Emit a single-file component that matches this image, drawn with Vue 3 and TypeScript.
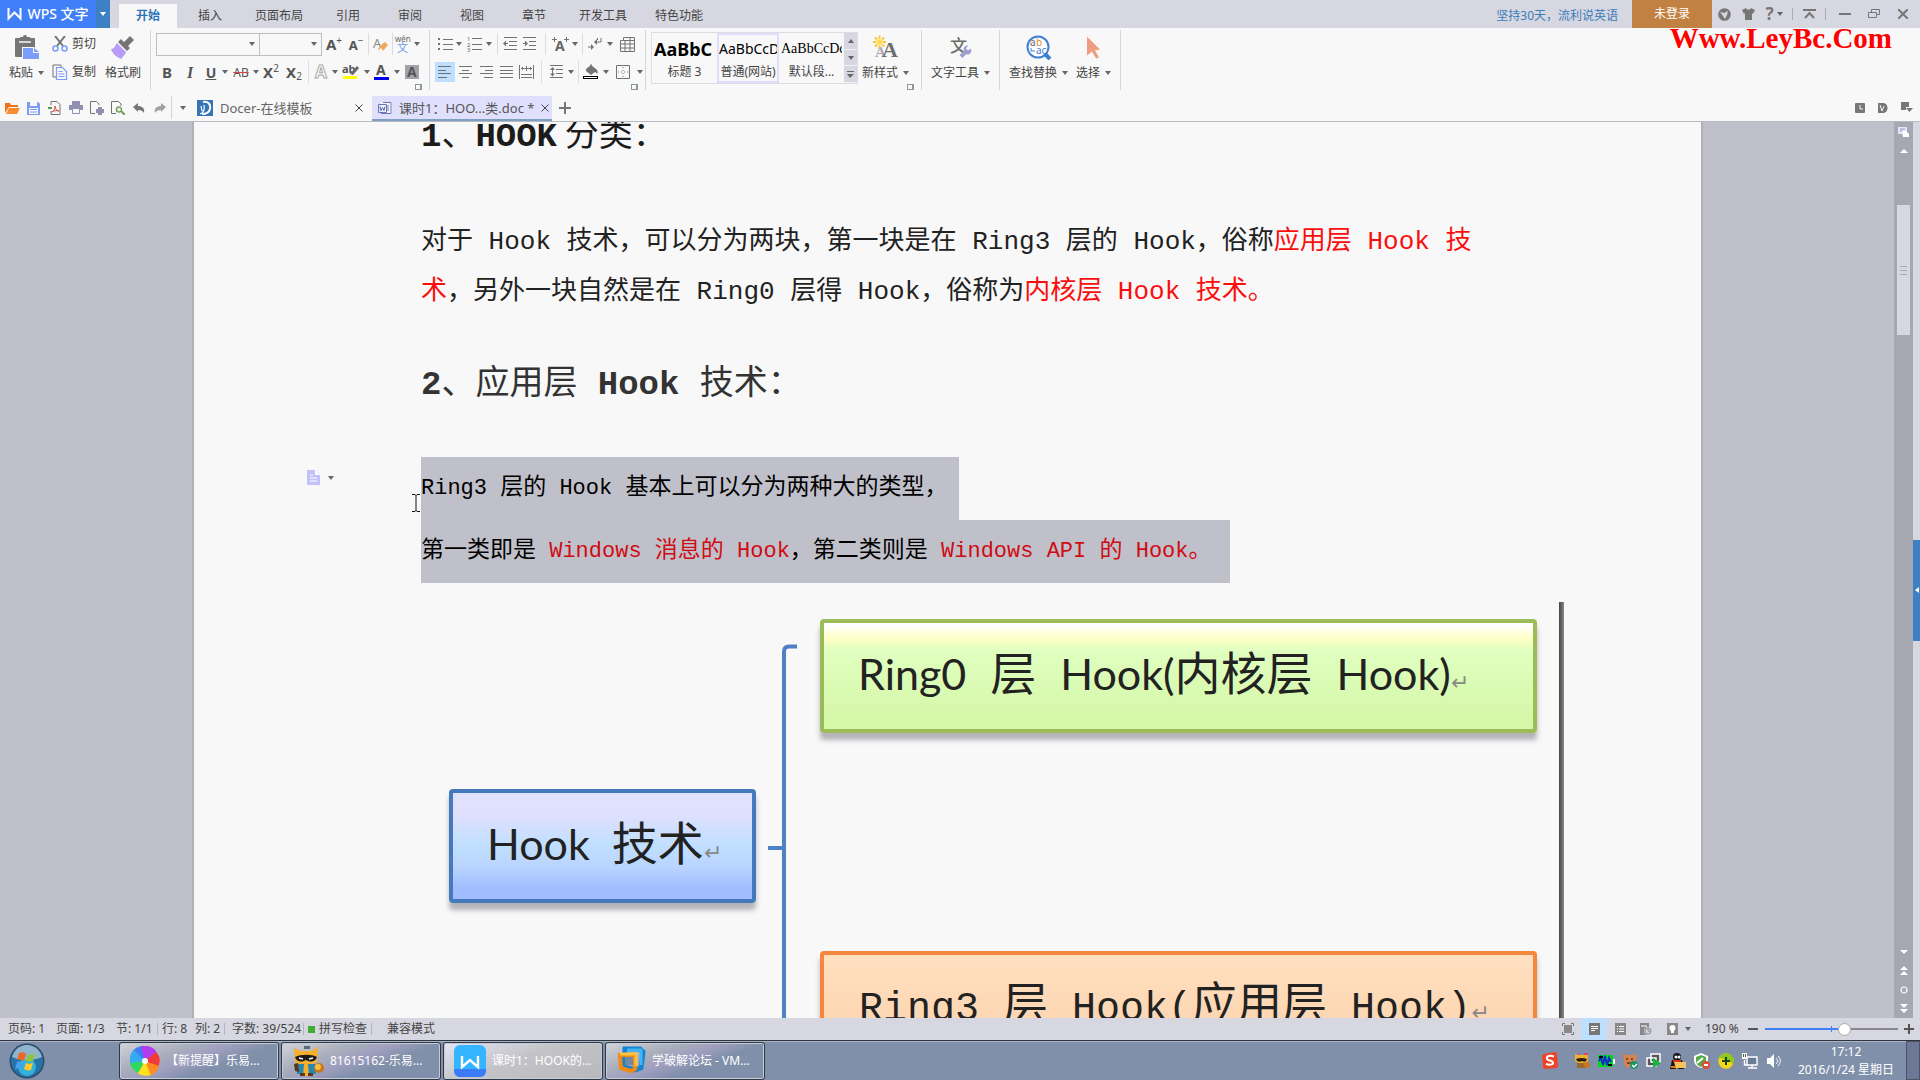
<script setup lang="ts">
import { h, ref, type FunctionalComponent } from 'vue'

type Part = { tag: string; attrs: Record<string, string | number>; text?: string }
type IconDef = [number, number, Part[]]

const P = (d: string, fill = '#737373'): Part => ({ tag: 'path', attrs: { d, fill } })
const S = (d: string, stroke = '#737373', w = 1): Part => ({ tag: 'path', attrs: { d, stroke, 'stroke-width': w, fill: 'none' } })
const C = (cx: number, cy: number, r: number, fill = '#737373'): Part => ({ tag: 'circle', attrs: { cx, cy, r, fill } })
const R = (x: number, y: number, width: number, height: number, fill = '#737373', rx = 0): Part => ({ tag: 'rect', attrs: { x, y, width, height, fill, rx } })
const T = (text: string, x: number, y: number, size: number, fill = '#666', weight = 400, family = 'Noto Sans'): Part => ({
  tag: 'text',
  attrs: { x, y, 'font-size': size, fill, 'font-weight': weight, 'font-family': `"${family}", "Noto Sans CJK SC", sans-serif` },
  text,
})

const ICONS: Record<string, IconDef> = {
  drop: [6, 4, [P('M0 0h6L3 4z', '#666')]],
  up: [6, 4, [P('M0 4h6L3 0z', '#666')]],
  more: [7, 7, [R(0, 0, 7, 1, '#666'), P('M0 3h7L3 7z', '#666')]],
  dropWhite: [6, 4, [P('M0 0h6L3 4z', '#fff')]],
  wps: [15, 14, [S('M1.5 1v10.5l6-6 6 6V1', '#fff', 2)]],
  paste: [26, 25, [R(1, 3, 20, 19, '#757575', 1), P('M6 6V2h3a2 2 0 0 1 4 0h3v4z', '#757575'), S('M5 7h12', '#f8f8f8', 1.5), P('M8 12h12l5 5v7H8z', '#f8f8f8'), P('M9 13h10v5h6v6H9z', '#7b9dfb'), P('M20 13l5 4h-5z', '#7b9dfb')]],
  cut: [16, 16, [S('M3 0l8 10M13 0L5 10', '#737373', 2), S('M6 12.5a2.5 2.5 0 1 1-5 0 2.5 2.5 0 0 1 5 0zM15 12.5a2.5 2.5 0 1 1-5 0 2.5 2.5 0 0 1 5 0z', '#7b9dfb', 1.5)]],
  copy: [16, 16, [S('M4 13H1V1h8v2', '#737373'), S('M4.500 3.500h6l4 4v8h-10z', '#7b9dfb', 1.2), S('M6.500 7.500h4M6.500 10h6M6.500 12.500h6', '#7b9dfb')]],
  brush: [26, 25, [P('M20 1l4 4-6 6 2 2-3 3-9-9 3-3 3 3z', '#757575'), P('M7 8l9 9c-1 4-5 5-4 7C7 23 2 18 1 14c3 0 4-3 6-6z', '#b99cf5')]],
  eraser: [15, 16, [T('A', 0, 12, 13, '#8a8a8a', 400, 'Noto Sans'), P('M8 9l4-3 3 3-5 6H6l-1-2z', '#f1a95c'), P('M7 12l3 2-1 1H6z', '#fff')]],
  wen: [16, 18, [T('wén', 0, 7, 8, '#666'), T('文', 2, 17, 11, '#6f9bea')]],
  bullets: [15, 14, [R(0, 1, 2, 2), R(0, 6, 2, 2), R(0, 11, 2, 2), R(5, 2, 10, 1), R(5, 7, 10, 1), R(5, 12, 10, 1)]],
  numbers: [15, 16, [T('1', 0, 5, 6), T('2', 0, 11, 6), T('3', 0, 16, 6), R(5, 2, 10, 1), R(5, 8, 10, 1), R(5, 13, 10, 1)]],
  outdent: [14, 14, [R(1, 0, 13, 1), R(6, 4, 8, 1), R(6, 8, 8, 1), R(1, 12, 13, 1), S('M5 6.500H1', '#737373', 1), P('M0 6.500l3-3v6z')]],
  indent: [14, 14, [R(0, 0, 13, 1), R(6, 4, 7, 1), R(6, 8, 7, 1), R(0, 12, 13, 1), S('M0 6.500h3'), P('M5 6.500l-3-3v6z')]],
  awidth: [17, 16, [T('A', 3, 15, 14, '#666', 700), S('M0 3.500h5M12 3.500h5M2.500 1v5M14.500 1v5')]],
  tabs: [14, 14, [S('M13 1v4H7'), P('M6 5l3-3v6z'), S('M0 10h4', '#737373'), P('M6 10l-3-3v6z'), R(9, 1, 1, 2)]],
  table: [15, 15, [S('M3.500.5h11v14H.5v-11h3zM3.500 3.500h11M.5 7h14M.5 11h14M5 3v12M10 0v15')]],
  left: [14, 12, [R(0, 0, 13, 1), R(0, 4, 8, 1), R(0, 7, 13, 1), R(0, 11, 9, 1)]],
  center: [14, 12, [R(0, 0, 13, 1), R(3, 4, 7, 1), R(0, 7, 13, 1), R(3, 11, 7, 1)]],
  right: [14, 12, [R(0, 0, 13, 1), R(5, 4, 8, 1), R(0, 7, 13, 1), R(4, 11, 9, 1)]],
  justify: [14, 12, [R(0, 0, 13, 1), R(0, 4, 13, 1), R(0, 7, 13, 1), R(0, 11, 13, 1)]],
  distribute: [16, 14, [R(0, 0, 1, 14), R(14, 0, 1, 14), S('M2 3.500h11M7.500 1v5M2 9.500h11M2 12.500h11'), P('M2 3.500l2-2v4zM13 3.500l-2-2v4z')]],
  spacing: [15, 14, [R(1, 0, 13, 1), R(7, 4, 7, 1), R(7, 8, 7, 1), R(1, 12, 13, 1), S('M3.500 3v7'), P('M1 5l2.500-3L6 5zM1 8.500l2.500 3 2.500-3z')]],
  bucket: [16, 16, [P('M3 5l5-4 5 4c2 1 2 4 1 5-1-1-1-2-2-2l-4 3-5-4z'), S('M8 0v4'), { tag: 'rect', attrs: { x: 0.5, y: 12.5, width: 14, height: 2, fill: '#fff', stroke: '#000' } }]],
  border: [15, 15, [S('M.5.5h13v13H.5z'), { tag: 'path', attrs: { d: 'M7 2v10M2 7h10', stroke: '#737373', 'stroke-dasharray': '1 2', fill: 'none' } }]],
  highlight: [18, 16, [T('ab', 0, 9, 11, '#555', 700), P('M8 10l7-8 2 2-6 7z', '#666'), R(1, 12, 14, 3, '#ffff00')]],
  fontColor: [16, 17, [T('A', 2, 11, 14, '#555', 700), R(0, 13, 15, 3, '#0000f0')]],
  outlineA: [15, 16, [{ tag: 'text', attrs: { x: 1, y: 14, 'font-size': 17, fill: '#fff', stroke: '#a8a8a8', 'stroke-width': 1, 'font-family': 'Noto Sans', 'font-weight': 700 }, text: 'A' }]],
  shadeA: [14, 15, [R(0, 0, 14, 14, '#a2a2a8'), T('A', 2, 12, 14, '#555', 700)]],
  newStyle: [26, 24, [T('A', 2, 21, 15, '#b0a8b8', 700, 'Liberation Serif'), T('A', 9, 21, 22, '#6d6d6d', 700, 'Liberation Serif'), S('M6.500 0v13M0 6.500h13M2 2l9 9M11 2l-9 9', '#f6c445', 2), C(6.5, 6.5, 3.5, '#fff2a0'), C(6.5, 6.5, 2.5, '#ffd84d')]],
  textTool: [26, 24, [T('文', 2, 16, 17, '#6d6d6d', 500), S('M13 21l5-5', '#9da0cf', 4), P('M16 15c-1-3 1-5 4-5l-2 3 2 2 3-2c1 4-1 6-4 6z', '#9da0cf')]],
  find: [26, 25, [C(12, 12, 10.5, '#fff'), S('M22.500 12a10.500 10.500 0 1 1-21 0 10.500 10.500 0 0 1 21 0z', '#3f80d0', 2), T('a', 4, 11, 10), T('b', 10, 11, 10, '#df8a3c'), T('ac', 10, 19, 10, '#3f80d0'), S('M5 13v3h4', '#3f80d0'), S('M19 19l5 5', '#3f80d0', 4)]],
  select: [15, 24, [P('M1 1l13 13-5 1 4 7-3 1-4-7-5 4z', '#ee9d80')]],
  open: [15, 12, [P('M0 1h5l1 2h7v2H4L0 11z', '#f1731c'), P('M4 6h11l-3 6H1z', '#ff8a2c')]],
  save: [13, 14, [P('M0 1h11l2 2v11H0z', '#7d9cf3'), R(3, 1, 7, 4, '#f8f8f8'), R(2, 7, 9, 6, '#f8f8f8'), S('M3 8.500h7M3 11h7', '#7d9cf3')]],
  pdf: [13, 14, [S('M3 4V.5h6l3 3v10H3V10', '#737373'), S('M4 11c3-2 3-4 3-6 0 3 2 5 4 5-3-1-5 0-7 1z', '#d84848'), S('M0 7h4', '#5a9a50', 2)]],
  print: [14, 13, [R(3, 0, 8, 4, '#8f8fb0'), R(0, 4, 14, 5, '#8f8fb0'), R(3, 8, 8, 5, '#f8f8f8'), S('M3.500 7.500h7v5h-7z', '#8f8fb0')]],
  preview: [14, 14, [S('M9 4V3L6.500.5H.5v12H5', '#737373'), R(6, 8, 8, 4, '#8f8fb0'), R(8, 6, 4, 2, '#8f8fb0'), R(8, 11, 4, 3, '#8f8fb0')]],
  find2: [14, 14, [S('M10 5V3L7.500.5H.5v12H5', '#737373'), S('M10.500 8.500a2.500 2.500 0 1 1-5 0 2.500 2.500 0 0 1 5 0z', '#6fa05c', 1.5), S('M10 10l4 4', '#6fa05c', 2)]],
  undo: [12, 10, [P('M0 4l5-4v3c4 0 7 2 6 7-1-2-3-3-6-3v2z', '#777')]],
  redo: [12, 10, [P('M12 4L7 0v3C3 3 0 5 1 10c1-2 3-3 6-3v2z', '#a0a0a0')]],
  docer: [16, 16, [R(0, 0, 16, 16, '#3574b5'), S('M6 2c5-1 8 2 7 7-1 4-4 5-8 5', '#fff', 2), S('M3 14c3-1 5-4 4-9M4 6l1 5', '#fff', 1.2)]],
  doc: [14, 14, [R(3, 1, 11, 12, '#f4f4ff'), S('M5 1.500h8v11H3', '#6d78a8'), S('M.5 3.500h8v8h-8z', '#6d78b8'), S('M2 5.500l1 4 1.500-3 1.500 3 1-4', '#4d6db8'), S('M10 4v6', '#6d78a8')]],
  close: [8, 8, [S('M.5.5l7 7M7.500.5l-7 7', '#444', 1)]],
  plus: [12, 12, [R(0, 5, 12, 2, '#777'), R(5, 0, 2, 12, '#777')]],
  zoomPlus: [10, 10, [R(0, 4, 10, 2, '#555'), R(4, 0, 2, 10, '#555')]],
  zoomMinus: [10, 2, [R(0, 0, 10, 2, '#555')]],
  globe: [13, 13, [C(6.5, 6.5, 6.3, '#777'), P('M2 4l4 1 4-2-1 4-2 4-2-3z', '#d7d7e1')]],
  shirt: [13, 12, [P('M4 0c1 2 4 2 5 0l4 2-2 4-1-1v7H3V5L2 6 0 2z', '#777')]],
  collapse: [13, 10, [R(0, 0, 13, 2, '#777'), S('M2 9l4.500-5L11 9', '#777', 2)]],
  minimize: [12, 2, [R(0, 0, 12, 2, '#777')]],
  restore: [12, 10, [S('M3.500 3V.5h8v5H9M.5 3.500h8v5h-8z', '#777')]],
  closeBig: [10, 10, [S('M0 0l10 10M10 0L0 10', '#777', 2)]],
  clock: [10, 10, [R(0, 0, 10, 10, '#777', 1), S('M5 2v4h3', '#f8f8f8')]],
  d: [10, 10, [P('M0 0h5c6 0 6 10 0 10H0z', '#777'), S('M2 2l2 6M6 3L4 8', '#f8f8f8')]],
  pane: [12, 11, [P('M0 0h8v5H5v3H0z', '#777'), P('M5 6h7L8.500 10z', '#777')]],
  nav: [12, 12, [R(0, 1, 9, 7, '#e4e4ff'), S('M2 3h5M2 5h3', '#9a9ac0'), P('M4 5h4l3 3v3H5z', '#fff')]],
  tri: [8, 4, [P('M0 4h8L4 0z', '#fff')]],
  triDown: [8, 4, [P('M0 0h8L4 4z', '#fff')]],
  dblUp: [8, 9, [P('M0 4h8L4 0zM0 9h8L4 5z', '#fff')]],
  ring: [8, 8, [S('M7 4a3 3 0 1 1-6 0 3 3 0 0 1 6 0z', '#fff', 1.2)]],
  dblDown: [8, 9, [P('M0 0h8L4 4zM0 5h8L4 9z', '#fff')]],
  triLeft: [4, 6, [P('M4 0v6L0 3z', '#fff')]],
  full: [12, 12, [R(2, 2, 8, 8, '#888'), S('M.5 3V.5H3M9 .5h2.500V3M11.500 9v2.500H9M3 11.500H.5V9', '#777')]],
  viewPage: [11, 12, [R(0, 0, 11, 12, '#777'), S('M2 3.500h7M2 5.500h7M2 7.500h4', '#fff')]],
  viewList: [11, 12, [R(0, 0, 11, 12, '#888'), S('M2 3.500h1M4 3.500h5M2 6h1M4 6h5M2 8.500h1M4 8.500h5', '#fff')]],
  viewWeb: [12, 12, [R(0, 0, 9, 12, '#888'), S('M1 3h6', '#fff'), C(8, 8, 4, '#d7d7e1'), S('M11 8a3 3 0 1 1-6 0 3 3 0 0 1 6 0zM8 6v2h2', '#888')]],
  viewBulb: [11, 12, [R(0, 0, 11, 12, '#888'), C(5.5, 5, 3, '#fff'), R(4, 7, 3, 3, '#fff')]],
  docMark: [13, 15, [P('M0 0h8l5 5v10H0z', '#c2c2fb'), S('M3 5h3M3 8h7M3 11h7', '#fff'), P('M8 0v5h5z', '#fff')]],
  orb: [36, 36, [C(18, 18, 17.5, '#304a68'), C(18, 18, 16, '#2673a8'), C(18, 24, 9, '#35b0d8'), P('M3 14C6 4 14 2 18 2s12 2 15 12c-8 4-22 4-30 0z', '#8fb4cc'), P('M10 10c3-1 5-1 7 1l-2 7c-2-1-4-2-7-1z', '#f0662a'), P('M19 11c2 1 4 1 7 0l-2 7c-2 1-5 1-7 0z', '#8dc63f'), P('M8 19c3-1 5 0 7 1l-2 6c-2-1-4-1-7 0z', '#3fa4e8'), P('M17 20c2 1 4 1 7 0l-2 7c-3 1-5 0-7-1z', '#fdc92e')]],
  pinwheel: [30, 30, [P('M15 15L3 5C7 0 11 0 15 0z', '#3f7df0'), P('M15 15L11 1C18-2 25 2 27 7z', '#b43cf0'), P('M15 15L26 6c4 4 5 9 2 15z', '#f23a3a'), P('M15 15l14 5c-2 6-5 8-10 10z', '#ff8a1f'), P('M15 15l6 14c-6 2-12 0-14-3z', '#ffe11f'), P('M15 15L8 27c-6-3-8-8-8-11z', '#31d860'), P('M15 15L0 17C-1 11 1 6 4 4z', '#37a8f2'), C(15, 15, 3, '#fff')]],
  tiger: [32, 30, [P('M2 2l7 3h10l7-4-1 15c-5 4-17 4-22 0z', '#f6b02c'), P('M3 11c6-3 17-3 22 0-2 6-8 5-11 3-3 2-9 3-11-3z', '#1d1a18'), S('M7 12l4 1M17 13l4-1', '#fff', 1.5), P('M5 18h18l1 10H5z', '#2686b4'), P('M12 18h4l1 12h-6z', '#f6b02c'), C(27, 22, 5, '#c9771c'), C(26, 21, 3, '#f2c23e'), P('M2 18l4-1 1 9-4-1zM8 27h5v3H8zM16 27h5v3h-5z', '#5a381c'), R(12, 0, 6, 3, '#5c6a78')]],
  wpsApp: [32, 32, [R(0, 0, 32, 32, '#35b5ff', 6), P('M0 24h32v2a6 6 0 0 1-6 6H6a6 6 0 0 1-6-6z', '#3b7bf5'), S('M8 11v11l8-7 8 7V11', '#fff', 2.4)]],
  vmware: [30, 30, [S('M9 3h15l3 3-2 16-6 2-11-3z', '#1683d0', 5), S('M11 4h14v15', '#42b5f5', 3), S('M4 9h15v14l-4 2-10-3z', '#f28a12', 4), S('M4 8h16v12', '#ffc23c', 3), R(9, 11, 8, 8, '#6f8aa5')]],
  sogou: [16, 17, [P('M2 2l11-2q2 0 2 2l1 12q0 2-2 2L3 17q-2 0-2-2L0 4q0-2 2-2z', '#ee4328'), S('M12 4.500C8 3 4 4 5 7c1 2 6 1 6 4 0 2-4 2-7 1', '#fff', 2)]],
  miniTiger: [16, 16, [P('M1 1l4 1h5l4-2v8c-3 3-10 3-13 0z', '#f0b030'), P('M2 6q5-2 11 0-1 4-5 2-5 2-6-2z', '#2a1a10'), R(3, 10, 9, 5, '#9c6a30'), C(13, 12, 3, '#c87820'), S('M10 1h4', '#e04080', 2), S('M3 1h3', '#e04080', 1)]],
  wave: [17, 12, [R(0, 0, 15, 12, '#00d820'), S('M1 6l2-4 2 8 2-9 2 9 2-7 2 4', '#1828d0', 2), S('M1 2h4M10 10h4', '#000', 2), R(15, 4, 2, 5, '#fff')]],
  bull: [16, 16, [P('M0 1l3 1h9l3-1-1 5v5c-3 5-9 5-12 0V6z', '#d58350'), S('M4 6h2M9 6h2M5 10h5', '#6b3218', 1.4), C(12, 12, 4, '#19936a'), S('M10 12l2 2 3-3', '#fff', 1.4)]],
  vmTray: [16, 15, [{ tag: 'path', attrs: { d: 'M5 1h9v8H5zM1 5h9v8H1z', fill: '#555', stroke: '#fff', 'stroke-width': 1.5 } }, P('M7 5l8 5-8 5z', '#14b83c')]],
  penguin: [16, 16, [C(7, 4, 4, '#151515'), P('M2 7h10l2 9H0z', '#151515'), C(6, 4, 1.5, '#fff'), C(9, 4, 1.5, '#fff'), S('M3 8h8', '#e03018', 2), P('M4 9h12v6H9l-3 1z', '#f6c25c'), R(1, 13, 5, 2, '#e87818')]],
  shield: [16, 16, [P('M7 0l7 3v4c0 5-4 7-7 8-3-1-7-3-7-8V3z', '#fff'), P('M7 2l5 2v4c0 3-3 5-5 6-3-1-5-3-5-6V4z', '#58a848'), S('M3 10l6-5', '#fff', 2), C(12, 12, 4, '#dc5038'), S('M10 12h4', '#fff', 2)]],
  plusBall: [16, 16, [C(8, 8, 7.7, '#f2d816'), P('M8 .3a7.700 7.700 0 0 1 7 11C10 6 5 6 1 5 2 2 5 .3 8 .3z', '#8cc820'), S('M8 4v8M4 8h8', '#154010', 2)]],
  network: [17, 16, [{ tag: 'path', attrs: { d: 'M5 4h10v8H5z', fill: '#6a7c94', stroke: '#fff', 'stroke-width': 1.4 } }, S('M10 12v3M6 15h9M2.500 7v5H5', '#fff', 1.4), R(0, 0, 5, 6, '#fff'), S('M1.500 1v3M3.500 1v3', '#555')]],
  speaker: [14, 14, [P('M0 4h3l4-4v14l-4-4H0z', '#fff'), S('M9 4c2 2 2 4 0 6M11 2c3 3 3 7 0 10', '#fff')]],
}

const Icon: FunctionalComponent<{ name: string }> = (props) => {
  const [w, ht, parts] = ICONS[props.name]
  return h(
    'svg',
    { class: 'icon', width: w, height: ht, viewBox: `0 0 ${w} ${ht}`, 'aria-hidden': 'true' },
    parts.map((p) => h(p.tag, p.attrs, p.text)),
  )
}
Icon.props = ['name']

const menuTabs = [
  { label: '开始', w: 58 }, { label: '插入', w: 66 }, { label: '页面布局', w: 72 }, { label: '引用', w: 66 }, { label: '审阅', w: 58 },
  { label: '视图', w: 66 }, { label: '章节', w: 58 }, { label: '开发工具', w: 80 }, { label: '特色功能', w: 72 },
]

// A tool is an icon or a short rich text; `w` is the slot it takes in its row.
type Tool = { w: number; icon?: string; html?: string; label?: string; sep?: boolean; on?: boolean }
const drop = (w: number): Tool => ({ w, icon: 'drop', label: '更多' })
const sep = (w: number): Tool => ({ w, sep: true })

const fontTop: Tool[] = [
  { w: 24, html: '<b>A</b><sup>+</sup>', label: '增大字号' }, { w: 20, html: '<b class="small">A</b><sup>−</sup>', label: '减小字号' },
  sep(4), { w: 20, icon: 'eraser', label: '清除格式' }, sep(4), { w: 18, icon: 'wen', label: '拼音指南' }, drop(10),
]
const fontBottom: Tool[] = [
  { w: 22, html: '<b>B</b>', label: '加粗' }, { w: 24, html: '<i>I</i>', label: '倾斜' }, { w: 18, html: '<u>U</u>', label: '下划线' }, drop(10),
  { w: 22, html: '<s>AB</s>', label: '删除线' }, drop(8), { w: 22, html: '<b>X</b><sup>2</sup>', label: '上标' }, { w: 24, html: '<b>X</b><sub>2</sub>', label: '下标' },
  sep(4), { w: 22, icon: 'outlineA', label: '文字效果' }, drop(6), { w: 26, icon: 'highlight', label: '突出显示' }, drop(6),
  { w: 24, icon: 'fontColor', label: '字体颜色' }, drop(6), { w: 24, icon: 'shadeA', label: '字符底纹' },
]
const paraTop: Tool[] = [
  { w: 20, icon: 'bullets', label: '项目符号' }, drop(8), { w: 22, icon: 'numbers', label: '编号' }, drop(8), sep(8),
  { w: 18, icon: 'outdent', label: '减少缩进' }, { w: 22, icon: 'indent', label: '增加缩进' }, sep(8), { w: 22, icon: 'awidth', label: '字符缩放' }, drop(8),
  sep(6), { w: 20, icon: 'tabs', label: '制表位' }, drop(10), { w: 24, icon: 'table', label: '表格' },
]
const paraBottom: Tool[] = [
  { w: 20, icon: 'left', label: '左对齐', on: true }, { w: 22, icon: 'center', label: '居中' }, { w: 20, icon: 'right', label: '右对齐' },
  { w: 20, icon: 'justify', label: '两端对齐' }, { w: 20, icon: 'distribute', label: '分散对齐' }, sep(8), { w: 22, icon: 'spacing', label: '行距' }, drop(8),
  sep(6), { w: 20, icon: 'bucket', label: '底纹' }, drop(10), { w: 24, icon: 'border', label: '边框' }, drop(10),
]

const styles = [
  { sample: 'AaBbC', label: '标题 3', cls: 'heavy' },
  { sample: 'AaBbCcD', label: '普通(网站)', cls: 'picked' },
  { sample: 'AaBbCcDd', label: '默认段...', cls: 'roman' },
]

const quick = ['open', 'save', 'pdf', 'print', 'preview', 'find2', 'undo', 'redo']

type Run = { t: string; c?: string }
const intro: Run[][] = [
  [{ t: '对于 Hook 技术，可以分为两块，第一块是在 Ring3 层的 Hook，俗称' }, { t: '应用层 Hook 技', c: 'red' }],
  [{ t: '术', c: 'red' }, { t: '，另外一块自然是在 Ring0 层得 Hook，俗称为' }, { t: '内核层 Hook 技术。', c: 'red' }],
]
const selected: Run[][] = [
  [{ t: 'Ring3 ', c: 'latin' }, { t: '层的' }, { t: ' Hook ', c: 'latin' }, { t: '基本上可以分为两种大的类型，' }],
  [
    { t: '第一类即是' }, { t: ' Windows ', c: 'latin dark-red' }, { t: '消息的', c: 'dark-red' }, { t: ' Hook', c: 'latin dark-red' }, { t: '，第二类则是' },
    { t: ' Windows API ', c: 'latin dark-red' }, { t: '的', c: 'dark-red' }, { t: ' Hook', c: 'latin dark-red' }, { t: '。', c: 'dark-red' },
  ],
]

const tasks = [
  { icon: 'pinwheel', label: '【新提醒】乐易...' }, { icon: 'tiger', label: '81615162-乐易...' },
  { icon: 'wpsApp', label: '课时1：HOOK的...', on: true }, { icon: 'vmware', label: '学破解论坛 - VM...' },
]
const tray = ['miniTiger', 'wave', 'bull', 'vmTray', 'penguin', 'shield', 'plusBall', 'network', 'speaker']
const views = ['full', 'viewPage', 'viewList', 'viewWeb', 'viewBulb']
const zoom = ref(61)
</script>

<template>
  <div class="app">
    <header class="title">
      <button class="brand"><Icon name="wps" />WPS 文字</button>
      <button class="brand-drop" aria-label="菜单"><Icon name="dropWhite" /></button>
      <nav class="menu">
        <button v-for="(m, i) in menuTabs" :key="m.label" :class="{ on: i === 0 }" :style="{ width: m.w + 'px' }">{{ m.label }}</button>
      </nav>
      <a class="promo" href="#">坚持30天，流利说英语</a>
      <button class="login">未登录</button>
      <div class="window">
        <button aria-label="在线"><Icon name="globe" /></button>
        <button aria-label="皮肤"><Icon name="shirt" /></button>
        <button class="help" aria-label="帮助">?<Icon name="drop" /></button>
        <i class="bar"></i>
        <button aria-label="收起功能区"><Icon name="collapse" /></button>
        <i class="bar"></i>
        <button class="control" aria-label="最小化"><Icon name="minimize" /></button>
        <button class="control" aria-label="还原"><Icon name="restore" /></button>
        <button class="control" aria-label="关闭"><Icon name="closeBig" /></button>
      </div>
      <div class="watermark">Www.LeyBc.Com</div>
    </header>

    <section class="ribbon">
      <div class="group clip">
        <button class="big"><Icon name="paste" /><span>粘贴<Icon name="drop" /></span></button>
        <div class="pair">
          <button><Icon name="cut" />剪切</button>
          <button><Icon name="copy" />复制</button>
        </div>
        <button class="big"><Icon name="brush" /><span>格式刷</span></button>
      </div>
      <div class="group">
        <div class="rows font-rows">
          <div class="row">
            <label class="combo font"><input aria-label="字体" /><Icon name="drop" /></label>
            <label class="combo size"><input aria-label="字号" /><Icon name="drop" /></label>
            <template v-for="(t, i) in fontTop" :key="i">
              <i v-if="t.sep" class="slot" :style="{ width: t.w + 'px' }"></i>
              <button v-else class="tool" :style="{ width: t.w + 'px' }" :aria-label="t.label"><Icon v-if="t.icon" :name="t.icon" /><span v-else class="glyph" v-html="t.html"></span></button>
            </template>
          </div>
          <div class="row">
            <template v-for="(t, i) in fontBottom" :key="i">
              <i v-if="t.sep" class="slot" :style="{ width: t.w + 'px' }"></i>
              <button v-else class="tool" :style="{ width: t.w + 'px' }" :aria-label="t.label"><Icon v-if="t.icon" :name="t.icon" /><span v-else class="glyph" v-html="t.html"></span></button>
            </template>
          </div>
        </div>
        <i class="launcher"></i>
      </div>
      <div class="group">
        <div class="rows para-rows">
          <div v-for="(row, r) in [paraTop, paraBottom]" :key="r" class="row">
            <template v-for="(t, i) in row" :key="i">
              <i v-if="t.sep" class="slot" :style="{ width: t.w + 'px' }"></i>
              <button v-else class="tool" :class="{ on: t.on }" :style="{ width: t.w + 'px' }" :aria-label="t.label"><Icon :name="t.icon!" /></button>
            </template>
          </div>
        </div>
        <i class="launcher"></i>
      </div>
      <div class="group style-group">
        <div class="gallery">
          <button v-for="s in styles" :key="s.label" :class="s.cls"><span class="sample">{{ s.sample }}</span><span>{{ s.label }}</span></button>
          <div class="gallery-nav">
            <button aria-label="上一行"><Icon name="up" /></button>
            <button aria-label="下一行"><Icon name="drop" /></button>
            <button aria-label="更多样式"><Icon name="more" /></button>
          </div>
        </div>
        <button class="big"><Icon name="newStyle" /><span>新样式<Icon name="drop" /></span></button>
        <i class="launcher"></i>
      </div>
      <div class="group wide"><button class="big"><Icon name="textTool" /><span>文字工具<Icon name="drop" /></span></button></div>
      <div class="group wide">
        <button class="big"><Icon name="find" /><span>查找替换<Icon name="drop" /></span></button>
        <button class="big"><Icon name="select" /><span>选择<Icon name="drop" /></span></button>
      </div>
    </section>

    <section class="docs">
      <div class="quick">
        <button v-for="q in quick" :key="q" :aria-label="q"><Icon :name="q" /></button>
      </div>
      <button class="quick-more" aria-label="自定义"><Icon name="drop" /></button>
      <div class="doc-tab"><Icon name="docer" /><span>Docer-在线模板</span><button aria-label="关闭标签"><Icon name="close" /></button></div>
      <div class="doc-tab active"><Icon name="doc" /><span>课时1：HOO...类.doc *</span><button aria-label="关闭标签"><Icon name="close" /></button></div>
      <button class="add" aria-label="新建"><Icon name="plus" /></button>
      <div class="doc-tools">
        <button aria-label="历史"><Icon name="clock" /></button>
        <button aria-label="Docer"><Icon name="d" /></button>
        <button aria-label="窗格"><Icon name="pane" /></button>
      </div>
    </section>

    <main class="work">
      <div class="canvas">
        <article class="page">
          <h2 class="first"><b>1</b>、<b>HOOK</b> 分类：</h2>
          <p class="intro">
            <span v-for="(line, i) in intro" :key="i" class="line"><span v-for="(r, j) in line" :key="j" :class="r.c">{{ r.t }}</span></span>
          </p>
          <h2 class="second"><b>2</b>、应用层<b> Hook </b>技术：</h2>
          <p class="chosen">
            <span v-for="(line, i) in selected" :key="i" class="line"><span v-for="(r, j) in line" :key="j" :class="r.c">{{ r.t }}</span></span>
            <span class="para-mark"><Icon name="docMark" /><Icon name="drop" /></span>
            <svg class="ibeam" width="8" height="18" viewBox="0 0 8 18" aria-hidden="true"><path d="M0 .5h3l1 1 1-1h3M0 17.500h3l1-1 1 1h3M4 1v16" fill="none" stroke="#111" /></svg>
          </p>
          <div class="diagram">
            <div class="node root"><span>Hook</span><span class="cjk">技术<i>↵</i></span></div>
            <svg class="bracket" width="32" height="420" viewBox="0 0 32 420" aria-hidden="true"><path d="M30 2.500h-8q-5 0-5 5V420M1 204h16" fill="none" stroke="#4f81c7" stroke-width="4" /></svg>
            <div class="node ring0"><span>Ring0</span><span class="cjk">层</span><span>Hook(<span class="cjk">内核层</span></span><span>Hook)<i>↵</i></span></div>
            <div class="node ring3"><span>Ring3</span><span class="cjk">层</span><span>Hook(<span class="cjk">应用层</span></span><span>Hook)<i>↵</i></span></div>
            <i class="rule"></i>
          </div>
        </article>
      </div>
      <div class="scroll">
        <button aria-label="导航"><Icon name="nav" /></button>
        <button aria-label="向上"><Icon name="tri" /></button>
        <div class="track"><i class="thumb"></i></div>
        <button aria-label="向下"><Icon name="triDown" /></button>
        <button aria-label="上一页"><Icon name="dblUp" /></button>
        <button aria-label="选择对象"><Icon name="ring" /></button>
        <button aria-label="下一页"><Icon name="dblDown" /></button>
      </div>
      <aside class="edge"><button aria-label="展开"><Icon name="triLeft" /></button></aside>
    </main>

    <footer class="status">
      <span class="s1">页码: 1</span><span class="s2">页面: 1/3</span><span class="s3">节: 1/1</span><i></i>
      <span class="s4">行: 8</span><span class="s5">列: 2</span><i></i><span class="s6">字数: 39/524</span><i></i>
      <span class="s7"><em></em>拼写检查</span><i></i><span class="s8">兼容模式</span>
      <div class="views">
        <button v-for="v in views" :key="v" :class="{ on: v === 'viewPage' }" :aria-label="v"><Icon :name="v" /></button>
        <Icon name="drop" />
      </div>
      <span class="percent">190 %</span>
      <button class="zoom-btn minus" aria-label="缩小"><Icon name="zoomMinus" /></button>
      <input v-model="zoom" class="zoom" type="range" min="0" max="100" aria-label="缩放" />
      <button class="zoom-btn" aria-label="放大"><Icon name="zoomPlus" /></button>
    </footer>

    <footer class="taskbar">
      <button class="start" aria-label="开始"><Icon name="orb" /></button>
      <button v-for="t in tasks" :key="t.label" class="task" :class="{ on: t.on }"><Icon :name="t.icon" /><span>{{ t.label }}</span></button>
      <div class="tray">
        <Icon class="ime" name="sogou" />
        <span v-for="t in tray" :key="t"><Icon :name="t" /></span>
      </div>
      <div class="time"><span>17:12</span><span>2016/1/24 星期日</span></div>
      <button class="desk" aria-label="显示桌面"></button>
    </footer>
  </div>
</template>

<style>
html, body { margin: 0; overflow: hidden; }
.glyph { font: 16px/20px "Noto Sans", sans-serif; color: #555; white-space: nowrap; }
.glyph b { font-size: 15px; }
.glyph sup, .glyph sub { font-size: 10px; line-height: 10px; }
.glyph sup { vertical-align: 6px; }
.glyph sub { vertical-align: -2px; }
.glyph i { font-family: "Liberation Serif", serif; font-weight: 700; }
.glyph s { font-size: 12px; text-decoration-color: #e04040; }
.glyph u { font-size: 14px; font-weight: 700; }
.glyph .small { font-size: 13px; }
</style>

<style scoped>
.app { display: flex; flex-direction: column; height: 100vh; background: #f8f8f8; color: #444; font: 12px/16px "Noto Sans", "Noto Sans CJK SC", sans-serif; overflow: hidden; }
button { display: flex; align-items: center; justify-content: center; padding: 0; border: 0; background: none; color: inherit; font: inherit; white-space: nowrap; }
.icon { display: block; flex: none; }

.title { display: flex; position: relative; flex: none; height: 28px; background: #d7d7e1; }
.brand { gap: 5px; width: 96px; background: #417ff9; color: #fff; font-size: 14px; font-weight: 500; }
.brand-drop { width: 14px; background: #3d80c4; }
.menu { display: flex; align-items: flex-end; margin-left: 9px; }
.menu button { height: 24px; }
.menu .on { background: #f8f8f8; color: #2a74b8; font-weight: 700; }
.promo { margin: 8px 14px 0 auto; color: #3a7dba; text-decoration: none; }
.login { width: 80px; background: #c18142; color: #fff; }
.window { display: flex; align-items: center; width: 208px; }
.window button { width: 24px; }
.window .help { gap: 3px; width: 28px; color: #777; font-size: 17px; font-weight: 700; }
.window .bar { width: 1px; height: 12px; margin: 0 4px; background: #aaaab4; }
.window .control { width: 29px; }
.watermark { position: absolute; right: 28px; top: 22px; color: #f00; font: 700 29px/32px "Liberation Serif", serif; z-index: 2; }

.ribbon { display: flex; flex: none; height: 68px; }
.group { display: flex; position: relative; height: 60px; margin-top: 2px; padding: 0 5px; border-right: 1px solid #d5d5dd; }
.rows { width: max-content; }
.row { display: flex; align-items: center; height: 28px; }
.font-rows { width: 268px; }
.para-rows { width: 205px; }
.tool, .slot { flex: none; }
.tool { height: 20px; }
.tool.on { background: #bfdfff; }
.slot { height: 22px; background: linear-gradient(#dcdce2, #dcdce2) center / 1px 100% no-repeat; }
.combo { display: flex; flex: none; align-items: center; box-sizing: border-box; height: 23px; border: 1px solid #bdbdc2; padding-right: 4px; }
.combo input { flex: 1; min-width: 0; width: 0; border: 0; background: none; }
.combo.font { width: 104px; }
.combo.size { width: 62px; border-left: 0; }
.big { flex-direction: column; justify-content: flex-start; padding: 5px 4px 0; gap: 5px; }
.big > .icon { height: 25px; }
.big span { display: flex; align-items: center; gap: 5px; }
.clip { width: 140px; }
.clip .pair { width: 50px; margin-left: 4px; margin-right: 4px; }
.pair button { gap: 4px; height: 28px; }
.launcher { position: absolute; right: 7px; bottom: 0; width: 4px; height: 4px; border: 1px solid #8a9a96; border-right-width: 2px; }
.gallery { display: flex; flex: none; box-sizing: border-box; width: 207px; height: 52px; margin-top: 2px; border: 1px solid #dcdce2; }
.gallery > button { flex-direction: column; justify-content: flex-end; flex: none; box-sizing: border-box; width: 65px; padding-bottom: 1px; overflow: hidden; border: 2px solid transparent; }
.gallery > .picked { width: 62px; border-color: #dedefc; }
.sample { width: 100%; height: 28px; overflow: hidden; color: #000; font-size: 14px; line-height: 26px; text-align: left; }
.heavy .sample { font-size: 18px; font-weight: 700; }
.roman .sample { font-family: "Liberation Serif", serif; }
.gallery-nav { display: flex; flex-direction: column; width: 13px; margin-left: auto; background: #d7d7e1; }
.gallery-nav button { flex: 1; border-bottom: 1px solid #f0f0f6; }
.style-group { padding-right: 8px; }

.docs { display: flex; flex: none; align-items: flex-start; height: 25px; border-bottom: 1px solid #b9b9c1; }
.quick { display: flex; width: 172px; box-sizing: border-box; padding: 1px 0 1px 2px; border-right: 1px solid #d5d5dd; }
.quick button { width: 21px; height: 21px; }
.quick-more { width: 22px; height: 23px; }
.doc-tab { display: flex; align-items: center; box-sizing: border-box; width: 178px; height: 23px; padding: 0 9px 0 3px; gap: 7px; color: #666; font-size: 13px; white-space: nowrap; }
.doc-tab button { width: 8px; margin-left: auto; }
.doc-tab.active { width: 180px; height: 25px; padding-left: 6px; background: #e0e0fd; border-bottom: 2px solid #7d9fc0; color: #555; }
.add { width: 26px; height: 23px; }
.doc-tools { display: flex; gap: 13px; height: 23px; margin: 0 7px 0 auto; }

.work { display: flex; flex: 1; min-height: 0; background: #c0c0ca; }
.canvas { flex: 1; overflow: hidden; padding: 0 191px 0 192px; }
.page { box-sizing: border-box; min-height: 100%; padding: 0 0 0 227px; border: 2px solid #b0b0b8; border-width: 0 2px; background: #f8f8f8; font-family: "Liberation Mono", "Noto Sans CJK SC", monospace; }
h2 { margin: 0; font-size: 34px; line-height: 40px; font-weight: 400; font-family: "Noto Sans CJK SC", sans-serif; color: #333; white-space: pre; }
h2 b { font-family: "Liberation Mono", monospace; }
.first { margin-top: -10px; color: #1c1c1c; }
.intro { margin: 60px 0 0; color: #222; font-size: 26px; line-height: 50px; }
.line { display: block; white-space: pre; }
.red { color: #fa0f0f; }
.second { margin-top: 43px; }
.chosen { position: relative; margin: 52px 0 0; color: #000; font-size: 23px; line-height: 63px; }
.chosen .line { width: 538px; height: 63px; overflow: hidden; background: #c0c0ca; }
.chosen .line + .line { width: 809px; }
.latin { font-size: 22px; }
.dark-red { color: #cf0c14; }
.para-mark { display: flex; position: absolute; left: -114px; top: 13px; align-items: center; gap: 8px; }
.ibeam { position: absolute; left: -9px; top: 37px; }

.diagram { position: relative; height: 440px; }
.node { display: flex; position: absolute; align-items: baseline; box-sizing: border-box; height: 114px; border: 4px solid; border-radius: 4px; color: #222; font: 43px/48px Lato, "Noto Sans CJK SC", sans-serif; white-space: nowrap; box-shadow: 0 7px 5px #8888909c; }
.node .cjk { font-size: 46px; }
.node i { color: #888; font: 22px/24px "DejaVu Sans", sans-serif; }
.root { left: 28px; top: 206px; width: 307px; gap: 22px; padding: 26px 0 0 34px; border-color: #4479bd; background: linear-gradient(#e0e0ff 20%, #c0dfff 50%, #b9d4ff 70%, #a0bdff 90%); }
.ring0 { left: 399px; top: 36px; width: 717px; gap: 24px; padding: 26px 0 0 34px; border-color: #9cbb59; background: linear-gradient(#fff 2%, #ffffc8 14%, #e0ffc0 26%, #d5f7a8 90%); }
.ring3 { left: 399px; top: 368px; width: 717px; gap: 24px; padding: 30px 0 0 35px; border-color: #f4863e; background: linear-gradient(#ffe0c0, #fcd0aa); font-family: "Liberation Mono", "Noto Sans CJK SC", monospace; font-size: 40px; }
.ring3 .cjk { font-size: 45px; }
.bracket { position: absolute; left: 346px; top: 61px; }
.rule { position: absolute; left: 1138px; top: 19px; width: 5px; height: 440px; background: linear-gradient(90deg, #444, #888); }

.scroll { display: flex; flex-direction: column; flex: none; align-items: center; width: 19px; background: #a7a7b1; }
.scroll button { width: 19px; height: 19px; }
.track { flex: 1; width: 13px; padding-top: 45px; }
.thumb { display: block; height: 130px; background: repeating-linear-gradient(#aaa 0 1px, transparent 1px 4px) center / 7px 9px no-repeat, #d7d7e1; }
.edge { display: flex; align-items: center; width: 7px; background: #d7d7e1; }
.edge button { width: 7px; height: 101px; margin-top: 40px; background: #3f80c4; }

.status { display: flex; flex: none; align-items: center; height: 22px; padding-left: 8px; background: #d7d7e1; }
.status > i { width: 1px; height: 12px; background: #b4b4be; margin-right: 4px; }
.s1 { width: 48px; } .s2 { width: 60px; } .s3 { width: 41px; } .s4 { width: 33px; } .s5 { width: 29px; }
.s6 { width: 71px; padding-left: 3px; }
.s7 { display: flex; align-items: center; gap: 4px; width: 63px; }
.s7 em { width: 7px; height: 7px; background: #3fae34; }
.s8 { padding-left: 11px; }
.views { display: flex; align-items: center; margin: 0 14px 0 auto; }
.views button { width: 26px; height: 22px; }
.views .on { background: #bfdfff; }
.percent { width: 42px; }
.zoom-btn { width: 22px; }
.minus { width: 12px; }
.zoom { appearance: none; width: 133px; height: 16px; margin: 0 0 0 6px; background: linear-gradient(#417ff9, #417ff9) 50% center / 1px 6px no-repeat, linear-gradient(90deg, #417ff9 61%, #88888e 61%) center / 100% 2px no-repeat; }
.zoom::-webkit-slider-thumb { appearance: none; width: 13px; height: 13px; border-radius: 50%; border: 1px solid #aaa; background: #fff; }

.taskbar { display: flex; flex: none; align-items: center; box-sizing: border-box; height: 40px; border-top: 1px solid #30343c; background: #8090aa; box-shadow: inset 0 1px #a8b4c8; color: #fff; }
.start { width: 54px; margin-right: 65px; }
.task { justify-content: flex-start; box-sizing: border-box; width: 160px; height: 38px; margin-right: 2px; padding-left: 10px; gap: 6px; border: 1px solid #2f3846; border-radius: 3px; box-shadow: inset 0 0 0 1px #c6cbd6; background: linear-gradient(160deg, #d2d4da 0, #a8aebb 30%, #a09fc0 45%, #8090aa 62%); }
.task.on { background: linear-gradient(160deg, #e4e4f4, #c4c4c8 45%, #b8b8bc); }
.tray { display: flex; align-items: center; margin-left: auto; }
.tray span { display: flex; justify-content: center; width: 24px; }
.ime { margin-right: 12px; }
.time { display: flex; flex-direction: column; align-items: center; width: 120px; line-height: 18px; }
.desk { width: 14px; height: 39px; border: 1px solid #4a5566; background: #6c7896; }
</style>
